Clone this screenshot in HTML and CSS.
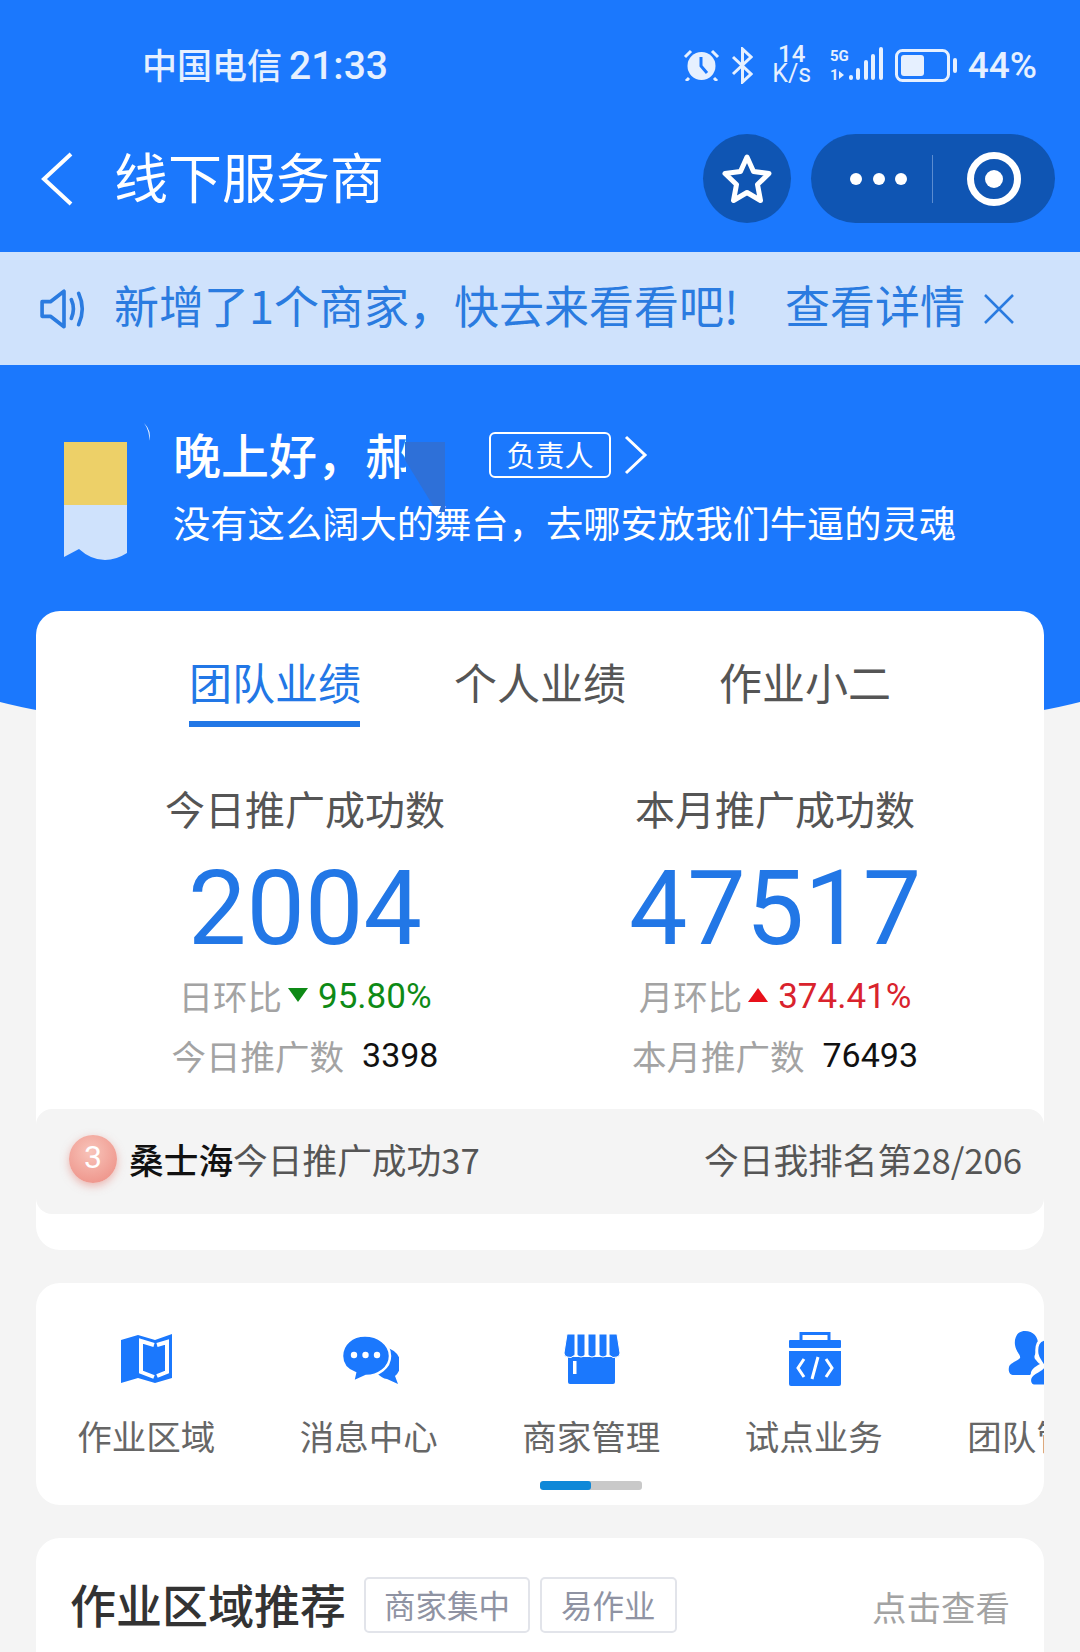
FILE: index.html
```html
<!DOCTYPE html>
<html lang="zh-CN">
<head>
<meta charset="UTF-8">
<title>线下服务商</title>
<link rel="stylesheet" href="styles.css">
</head>
<body>
<div class="hero-bg"></div>
<div class="page">

  <div class="status">
    <span class="carrier">中国电信<span class="clock">21:33</span></span>
    <div class="status-right">
      <svg class="ic-alarm" viewBox="0 0 37 32"><circle cx="18.500" cy="17" r="14" fill="#e6f0ff"/><path d="M18 8v9l6 7" fill="none" stroke="#1b78fd" stroke-width="3"/><path d="M2 8l6-6M35 8l-6-6M6 29l-3 3M31 29l3 3" stroke="#e6f0ff" stroke-width="3" fill="none"/></svg>
      <svg class="ic-bt" viewBox="0 0 22 37"><path d="M2 10l18 17-8.500 8V2L20 10 2 27" fill="none" stroke="#e6f0ff" stroke-width="3"/></svg>
      <div class="speed"><span class="speed-num">14</span><span class="speed-unit">K/s</span></div>
      <svg class="ic-signal" viewBox="0 0 54 36"><text x="0" y="14" class="sig-5g">5G</text><text x="0" y="33" class="sig-1">1</text><path d="M9 24l5 4-5 4z" fill="#e6f0ff"/><rect x="19" y="28" width="4" height="5" rx="2" fill="#e6f0ff"/><rect x="26" y="21" width="4" height="12" rx="2" fill="#e6f0ff"/><rect x="34" y="13" width="4" height="20" rx="2" fill="#e6f0ff"/><rect x="41" y="7" width="4" height="26" rx="2" fill="#e6f0ff"/><rect x="49" y="0" width="4" height="33" rx="2" fill="#e6f0ff"/></svg>
      <svg class="ic-batt" viewBox="0 0 62 33"><rect x="1.500" y="1.500" width="52" height="30" rx="6" fill="none" stroke="#e6f0ff" stroke-width="3"/><rect x="6" y="6" width="23" height="21" rx="3" fill="#e6f0ff"/><rect x="58" y="9" width="4" height="15" rx="2" fill="#e6f0ff"/></svg>
      <span class="batt-text">44%</span>
    </div>
  </div>

  <div class="nav">
    <svg class="ic-back" viewBox="0 0 34 54"><path d="M31 2L4 27l27 25" fill="none" stroke="#fff" stroke-width="4"/></svg>
    <h1 class="nav-title">线下服务商</h1>
    <div class="nav-btns">
      <div class="round-btn">
        <svg width="52" height="52" viewBox="0 0 52 52"><path d="M26 4l6.500 14.500 15.500 2-11.500 11 3 16L26 39.500 12.500 47.500l3-16L4 20.500l15.500-2z" fill="none" stroke="#fff" stroke-width="5" stroke-linejoin="round"/></svg>
      </div>
      <div class="pill">
        <div class="dots"><i></i><i></i><i></i></div>
        <div class="pill-line"></div>
        <svg width="54" height="54" viewBox="0 0 54 54"><circle cx="27" cy="27" r="23.500" fill="none" stroke="#fff" stroke-width="7"/><circle cx="27" cy="27" r="9" fill="#fff"/></svg>
      </div>
    </div>
  </div>

  <div class="notice">
    <svg class="ic-horn" viewBox="0 0 46 40"><path d="M2 13h8L23 3v34L10 27H2z" fill="none" stroke="#2a7be0" stroke-width="3.500" stroke-linejoin="round"/><path d="M30 11q4 9 0 18M37 5q7 15 0 30" fill="none" stroke="#2a7be0" stroke-width="3.500" stroke-linecap="round"/></svg>
    <span class="notice-text">新增了1个商家，快去来看看吧!</span>
    <span class="notice-link">查看详情</span>
    <svg class="ic-close" viewBox="0 0 32 32"><path d="M2 2l28 28M30 2L2 30" stroke="#2a7be0" stroke-width="2.500" fill="none"/></svg>
  </div>

  <div class="greet">
    <svg class="bookmark" viewBox="0 0 63 118"><rect width="63" height="63" fill="#edd068"/><path d="M0 63H63V111Q52 118 41 118 27 118 15 107L0 115Z" fill="#cfe2fc"/></svg>
    <div class="greet-body">
      <div class="greet-row">
        <span class="hello">晚上好，郝</span>
        <span class="role">负责人</span>
        <svg class="ic-more" viewBox="0 0 24 40"><path d="M2 2l19 18L2 38" fill="none" stroke="#fff" stroke-width="3"/></svg>
      </div>
      <p class="motto">没有这么阔大的舞台，去哪安放我们牛逼的灵魂</p>
    </div>
    <svg class="smudge" viewBox="0 0 40 82"><path d="M0 0h40v70H32L16 44 0 18z" fill="#2e70d8"/><path d="M22 64h14l-4 11z" fill="#fff"/></svg>
    <svg class="sliver" viewBox="0 0 8 18"><path d="M0 0Q8 8 5 18 6 8 0 0Z" fill="#fff"/></svg>
  </div>

  <section class="card perf">
    <div class="tabs">
      <div class="tab tab-on">团队业绩</div>
      <div class="tab">个人业绩</div>
      <div class="tab">作业小二</div>
    </div>
    <div class="stats">
      <div class="stat">
        <div class="stat-title">今日推广成功数</div>
        <div class="stat-num">2004</div>
        <div class="stat-line">
          <span class="muted">日环比</span><i class="arrow-down"></i><span class="green">95.80%</span>
        </div>
        <div class="stat-line stat-total">
          <span class="muted">今日推广数</span><span class="total">3398</span>
        </div>
      </div>
      <div class="stat">
        <div class="stat-title">本月推广成功数</div>
        <div class="stat-num">47517</div>
        <div class="stat-line">
          <span class="muted">月环比</span><i class="arrow-up"></i><span class="red">374.41%</span>
        </div>
        <div class="stat-line stat-total">
          <span class="muted">本月推广数</span><span class="total">76493</span>
        </div>
      </div>
    </div>
    <div class="rank">
      <div class="rank-left">
        <span class="medal">3</span>
        <span class="rank-name">桑士海</span><span>今日推广成功37</span>
      </div>
      <span>今日我排名第28/206</span>
    </div>
  </section>

  <section class="card menu">
    <div class="menu-row">
      <div class="menu-item">
        <svg width="52" height="50" viewBox="0 0 52 50"><path d="M0 6L17 1l17 5 17-6v44l-17 5-17-5-17 5z" fill="#1b78fd"/><path d="M33 11L20 7v31l13 5M36 11l10-3v30l-10 4" fill="none" stroke="#fff" stroke-width="4"/></svg>
        <span>作业区域</span>
      </div>
      <div class="menu-item">
        <svg width="58" height="50" viewBox="0 0 58 50"><path d="M44 14a16 16 0 0 1 10 28l3 8-11-5a16 16 0 0 1-2-31z" fill="#1b78fd"/><path d="M24 1.500C37 1.500 49 10 49 22S37 42 25 42l-13 6 2-9C6 36 1 30 1 22 1 10 11 1.500 24 1.500z" fill="#1b78fd" stroke="#fff" stroke-width="2.500"/><circle cx="13" cy="21" r="3.200" fill="#fff"/><circle cx="24.500" cy="21" r="3.200" fill="#fff"/><circle cx="36" cy="21" r="3.200" fill="#fff"/></svg>
        <span>消息中心</span>
      </div>
      <div class="menu-item">
        <svg width="56" height="50" viewBox="0 0 56 50"><path d="M4 23h47v25a2 2 0 0 1-2 2H6a2 2 0 0 1-2-2z" fill="#1b78fd"/><path d="M3 0h8v21q-4 4-8 2-3-1-3-4zM13 0h8v21q-4 4-8 0zM24 0h8v21q-4 4-8 0zM35 0h8v21q-4 4-8 0zM45 0h8l3 19q0 3-3 4-4 2-8-2z" fill="#1b78fd" stroke="#fff" stroke-width="1"/><rect x="9" y="27" width="3.500" height="13" fill="#fff"/></svg>
        <span>商家管理</span>
      </div>
      <div class="menu-item">
        <svg width="52" height="54" viewBox="0 0 52 54"><rect x="12" y="1.500" width="28" height="9" fill="none" stroke="#1b78fd" stroke-width="3"/><rect y="8" width="52" height="8" rx="1" fill="#1b78fd"/><path d="M0 19h52v33a2 2 0 0 1-2 2H2a2 2 0 0 1-2-2z" fill="#1b78fd"/><path d="M15 27l-6 9 6 9M37 27l6 9-6 9M29 25l-6 22" fill="none" stroke="#fff" stroke-width="3"/></svg>
        <span>试点业务</span>
      </div>
      <div class="menu-item menu-item-last">
        <svg width="62" height="56" viewBox="0 0 62 56"><path d="M17 0c9 0 14 7 13 15-1 6-5 10-3 13 3 3 3 4 5 5-6 3-10 7-9 11H6c-4 0-6-3-5-8 1-4 9-6 11-9 1-3-4-6-5-13C6 7 9 0 17 0z" fill="#1b78fd"/><path d="M38 8c9 0 14 7 13 15-1 6-5 10-3 13 3 4 13 4 13 11 0 4-1 8-5 8H26c-4 0-5-5-4-8 2-6 11-7 13-11 1-3-5-6-6-13C28 15 30 8 38 8z" fill="#1b78fd" stroke="#fff" stroke-width="3"/></svg>
        <span>团队管理</span>
      </div>
    </div>
    <div class="scrollbar"><div class="scrollbar-on"></div></div>
  </section>

  <section class="card rec">
    <h2 class="rec-title">作业区域推荐</h2>
    <span class="tag">商家集中</span>
    <span class="tag">易作业</span>
    <span class="rec-more">点击查看</span>
  </section>

</div>
</body>
</html>
```

FILE: styles.css
```css
* {
    box-sizing: border-box;
}
html, body {
    margin: 0;
    padding: 0;
    width: 1080px;
    height: 1652px;
    overflow: hidden;
}
body {
    position: relative;
    background-color: #f4f4f4;
    font-family: "Noto Sans CJK SC", "Noto Sans", sans-serif;
    color: #555;
}
.hero-bg {
    position: absolute;
    left: 0;
    top: 0;
    width: 1080px;
    height: 744px;
    background-color: #1b78fd;
    clip-path: path("M0 0H1080V702A600 75 0 0 1 0 702Z");
}
.page {
    position: relative;
}

/* status bar */
.status {
    height: 130px;
    display: flex;
    align-items: center;
    justify-content: space-between;
    padding: 0 43px 0 142px;
}
.carrier {
    display: flex;
    align-items: baseline;
    margin-top: -4px;
    font-size: 35px;
    font-weight: 500;
    color: #e6f0ff;
}
.clock {
    margin-left: 7px;
    font-family: Roboto, sans-serif;
    font-size: 39px;
}
.status-right {
    display: flex;
    align-items: center;
    margin-left: -3px;
}
.ic-alarm {
    width: 37px;
    height: 32px;
}
.ic-bt {
    width: 22px;
    height: 37px;
    margin-left: 11px;
}
.speed {
    width: 38px;
    margin-left: 20px;
    margin-top: -2px;
    display: flex;
    flex-direction: column;
    align-items: center;
    color: #e6f0ff;
    font-family: Roboto, sans-serif;
    line-height: 20px;
}
.speed-num {
    font-size: 24px;
    font-weight: 500;
}
.speed-unit {
    font-size: 25px;
}
.ic-signal {
    width: 54px;
    height: 36px;
    margin-left: 19px;
}
.sig-5g {
    font: bold 15px "Roboto", sans-serif;
    fill: #e6f0ff;
}
.sig-1 {
    font: bold 15px "Roboto", sans-serif;
    fill: #e6f0ff;
}
.ic-batt {
    width: 62px;
    height: 33px;
    margin-left: 11px;
}
.batt-text {
    margin-left: 11px;
    margin-top: 1px;
    font: 500 37px Roboto, sans-serif;
    color: #e6f0ff;
}

/* title bar */
.nav {
    height: 122px;
    display: flex;
    align-items: flex-start;
    padding: 4px 25px 0 40px;
}
.ic-back {
    width: 34px;
    height: 54px;
    margin-top: 18px;
}
.nav-title {
    margin: -2px 0 0 40px;
    font-size: 54px;
    font-weight: 400;
    line-height: 88px;
    color: #fff;
}
.nav-btns {
    margin-left: auto;
    display: flex;
    gap: 20px;
}
.round-btn {
    width: 88px;
    height: 89px;
    border-radius: 50%;
    background-color: #0f55b3;
    display: flex;
    align-items: center;
    justify-content: center;
}
.pill {
    width: 244px;
    height: 89px;
    border-radius: 45px;
    background-color: #0f55b3;
    display: flex;
    align-items: center;
    padding-left: 39px;
}
.dots {
    display: flex;
    gap: 10.500px;
}
.dots i {
    width: 12px;
    height: 12px;
    border-radius: 50%;
    background-color: #fff;
}
.pill-line {
    width: 1px;
    height: 48px;
    margin-left: 25px;
    background-color: #5b8cd0;
}
.pill svg {
    margin-left: 34px;
}

/* notice */
.notice {
    height: 113px;
    background-color: #cfe2fc;
    display: flex;
    align-items: center;
    padding: 0 0 8px 40px;
    color: #2a7be0;
    font-size: 45px;
}
.ic-horn {
    width: 48px;
    height: 42px;
    margin-top: 8px;
}
.notice-text {
    margin-left: 26px;
    width: 671px;
    white-space: nowrap;
}
.ic-close {
    width: 32px;
    height: 32px;
    margin-top: 8px;
    margin-left: 18px;
}

/* greeting */
.greet {
    position: relative;
    height: 246px;
    display: flex;
    padding: 77px 0 0 64px;
}
.bookmark {
    width: 63px;
    height: 118px;
}
.greet-body {
    margin-left: 46px;
    margin-top: -15px;
    color: #fff;
}
.greet-row {
    display: flex;
    align-items: center;
    height: 56px;
}
.hello {
    margin-top: -4px;
    font-size: 48px;
    font-weight: 500;
    width: 233px;
    height: 60px;
    line-height: 60px;
    white-space: nowrap;
    overflow: hidden;
}
.role {
    margin-left: 83px;
    width: 122px;
    height: 46px;
    border: 2px solid #fff;
    border-radius: 6px;
    font-size: 29px;
    line-height: 40px;
    text-align: center;
}
.ic-more {
    width: 24px;
    height: 40px;
    margin-left: 13px;
}
.motto {
    margin: 12px 0 0;
    font-size: 37.300px;
    line-height: 54px;
    white-space: nowrap;
}
.smudge {
    position: absolute;
    left: 405px;
    top: 77px;
    width: 40px;
    height: 82px;
}
.sliver {
    position: absolute;
    left: 144px;
    top: 58px;
    width: 8px;
    height: 18px;
}

/* cards */
.card {
    margin: 0 36px;
    background-color: #fff;
    border-radius: 24px;
}
.perf {
    height: 639px;
}
.tabs {
    display: flex;
    gap: 94px;
    padding: 34px 0 0 153px;
}
.tab {
    width: 171px;
    height: 82px;
    font-size: 43px;
    line-height: 72px;
    text-align: center;
    color: #555;
    white-space: nowrap;
}
.tab-on {
    color: #2277e6;
    border-bottom: 6px solid #2277e6;
}
.stats {
    display: grid;
    grid-template-columns: 470px 470px;
    padding: 0 34px;
    margin-top: 53px;
}
.stat {
    display: flex;
    flex-direction: column;
    align-items: center;
}
.stat-title {
    font-size: 40px;
    line-height: 56px;
    color: #555;
}
.stat-num {
    font-family: Roboto, sans-serif;
    font-size: 104px;
    line-height: 122px;
    color: #2277e6;
    margin-top: 12px;
}
.stat-line {
    display: flex;
    align-items: center;
    height: 46px;
    font-size: 34.500px;
    line-height: 46px;
    margin-top: 2px;
}
.stat-total {
    margin-top: 14px;
}
.muted {
    color: #a3a3a3;
}
.green {
    padding-top: 4px;
    color: #0e8a16;
    font-family: Roboto, sans-serif;
    font-size: 35px;
}
.red {
    padding-top: 4px;
    color: #d9232d;
    font-family: Roboto, sans-serif;
    font-size: 35px;
}
.total {
    margin-left: 18px;
    color: #111;
    font-family: Roboto, sans-serif;
    font-size: 34px;
}
.arrow-down {
    margin: 0 10px 0 6px;
    border-left: 10px solid transparent;
    border-right: 10px solid transparent;
    border-top: 14px solid #0e8a16;
}
.arrow-up {
    margin: 0 10px 0 6px;
    border-left: 10px solid transparent;
    border-right: 10px solid transparent;
    border-bottom: 14px solid #e8101a;
}
.rank {
    margin-top: 31px;
    height: 105px;
    border-radius: 16px;
    background-color: #f4f4f4;
    display: flex;
    align-items: center;
    justify-content: space-between;
    padding: 0 22px 6px 33px;
    font-size: 34.700px;
    color: #555;
}
.rank-left {
    display: flex;
    align-items: center;
}
.medal {
    width: 48px;
    height: 48px;
    margin-right: 12px;
    border-radius: 50%;
    background: radial-gradient(circle at 45% 35%, #f8c4ba, #ec8a80);
    box-shadow: 0 3px 8px rgba(226, 120, 110, 0.5);
    color: #fff;
    font: 32px/44px Roboto, sans-serif;
    text-align: center;
}
.rank-name {
    color: #111;
    font-weight: 500;
}

/* menu */
.menu {
    margin-top: 33px;
    height: 222px;
    padding-top: 48px;
    overflow: hidden;
}
.menu-row {
    display: flex;
    margin-left: -1px;
}
.menu-item {
    flex: 0 0 222.500px;
    display: flex;
    flex-direction: column;
    align-items: center;
    font-size: 34.500px;
    color: #666;
    white-space: nowrap;
}
.menu-item svg {
    height: 56px;
    margin-left: 2px;
}
.menu-item-last svg {
    margin-left: 6px;
}
.menu-item span {
    margin-top: 24px;
    line-height: 48px;
}
.scrollbar {
    width: 102px;
    height: 9px;
    margin: 22px 0 0 504px;
    border-radius: 3px;
    background-color: #c9c9c9;
    overflow: hidden;
}
.scrollbar-on {
    width: 51px;
    height: 9px;
    border-radius: 3px;
    background-color: #0f88d8;
}

/* recommend */
.rec {
    margin-top: 33px;
    height: 160px;
    display: flex;
    align-items: flex-start;
    padding: 39px 34px 0 34px;
}
.rec-title {
    margin: -2px 0 0;
    font-size: 46px;
    font-weight: 500;
    line-height: 56px;
    color: #333;
}
.tag {
    height: 56px;
    margin-left: 10px;
    padding: 0 18px;
    border: 2px solid #e2e4ea;
    border-radius: 5px;
    font-size: 31.500px;
    line-height: 50px;
    color: #8f93a3;
}
.tag + .tag {
    padding: 0 19px;
}
.rec-title + .tag {
    margin-left: 18px;
}
.rec-more {
    margin-left: auto;
    font-size: 34.500px;
    line-height: 58px;
    color: #a3a3a3;
}
```
